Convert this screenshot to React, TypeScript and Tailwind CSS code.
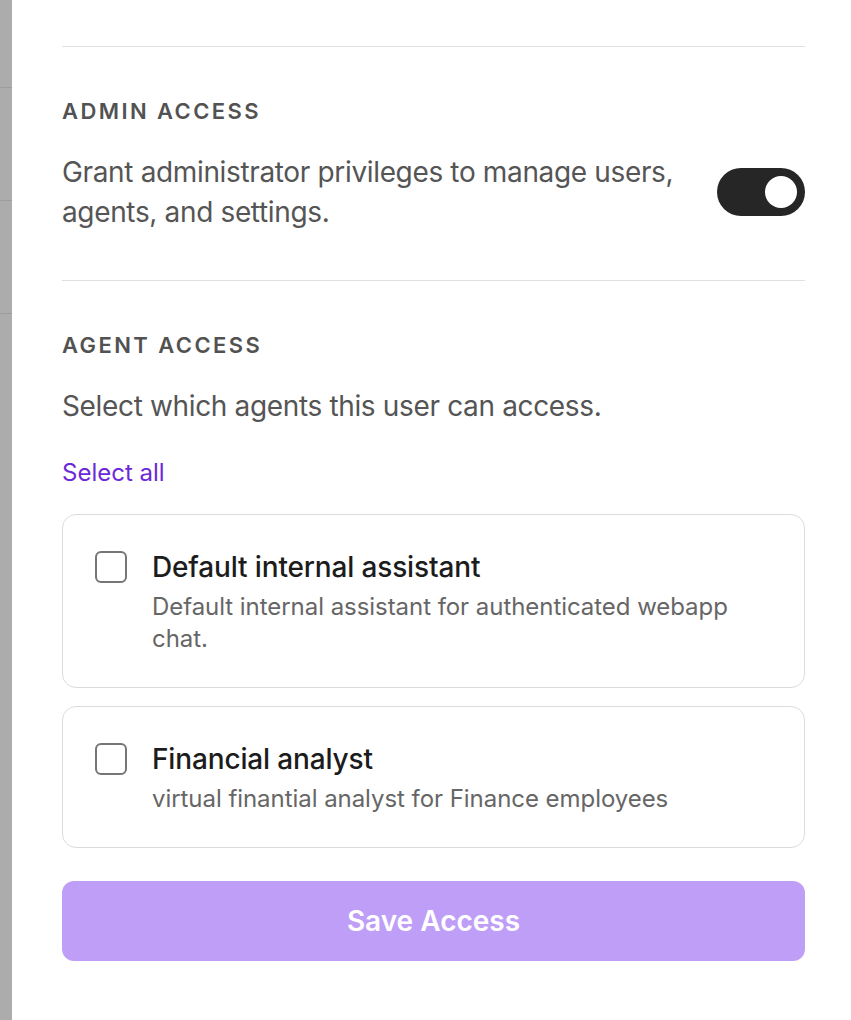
import React from "react";

function AgentCard({ title, desc }: { title: string; desc: string }) {
  return (
    <div className="flex gap-[25px] rounded-[14px] border border-[#dcdcdc] p-[32px]">
      <div className="mt-[4px] h-[32px] w-[32px] shrink-0 rounded-[6px] border-2 border-[#767676] bg-white" />
      <div className="flex flex-col gap-[4px]">
        <div className="text-[28px] leading-[40px] font-medium tracking-[-0.15px] text-[#1c1c1c]">{title}</div>
        <div className="text-[24px] leading-[32px] tracking-[-0.05px] text-[#666666]">{desc}</div>
      </div>
    </div>
  );
}

export default function App() {
  return (
    <div
      className="flex h-[1020px] w-[851px] overflow-hidden bg-white"
      style={{ fontFamily: "Inter, 'Noto Sans', sans-serif" }}
    >
      <div className="flex w-[12px] shrink-0 flex-col bg-[#acacac]">
        <div className="h-[88px] border-b border-[#9c9c9c]" />
        <div className="h-[113px] border-b border-[#9c9c9c]" />
        <div className="h-[113px] border-b border-[#9c9c9c]" />
      </div>
      <div className="flex-1 pt-[46px] pl-[50px] pr-[46px]">
        <div className="border-t border-[#e0e0e0]" />

        <div className="mt-[48px] text-[22px] leading-[32px] font-semibold tracking-[0.11em] text-[#525252]">
          ADMIN ACCESS
        </div>
        <div className="mt-[25px] flex items-center justify-between gap-[24px]">
          <p className="text-[28px] leading-[40px] tracking-[-0.35px] text-[#555555]">
            Grant administrator privileges to manage users, agents, and settings.
          </p>
          <div className="flex h-[48px] w-[88px] shrink-0 items-center justify-end rounded-full bg-[#262626] pr-[8px]">
            <div className="h-[32px] w-[32px] rounded-full bg-white" />
          </div>
        </div>

        <div className="mt-[48px] border-t border-[#e0e0e0]" />

        <div className="mt-[48px] text-[22px] leading-[32px] font-semibold tracking-[0.11em] text-[#525252]">
          AGENT ACCESS
        </div>
        <p className="mt-[25px] text-[28px] leading-[40px] tracking-[-0.35px] text-[#555555]">
          Select which agents this user can access.
        </p>
        <button className="mt-[31px] block text-[24px] leading-[32px] text-[#6d28d9]">
          Select all
        </button>

        <div className="mt-[25px] flex flex-col gap-[18px]">
          <AgentCard
            title="Default internal assistant"
            desc="Default internal assistant for authenticated webapp chat."
          />
          <AgentCard
            title="Financial analyst"
            desc="virtual finantial analyst for Finance employees"
          />
        </div>

        <button className="mt-[33px] flex h-[80px] w-full items-center justify-center rounded-[12px] bg-[#bf9ef7] text-[28px] font-semibold text-white">
          Save Access
        </button>
      </div>
    </div>
  );
}
